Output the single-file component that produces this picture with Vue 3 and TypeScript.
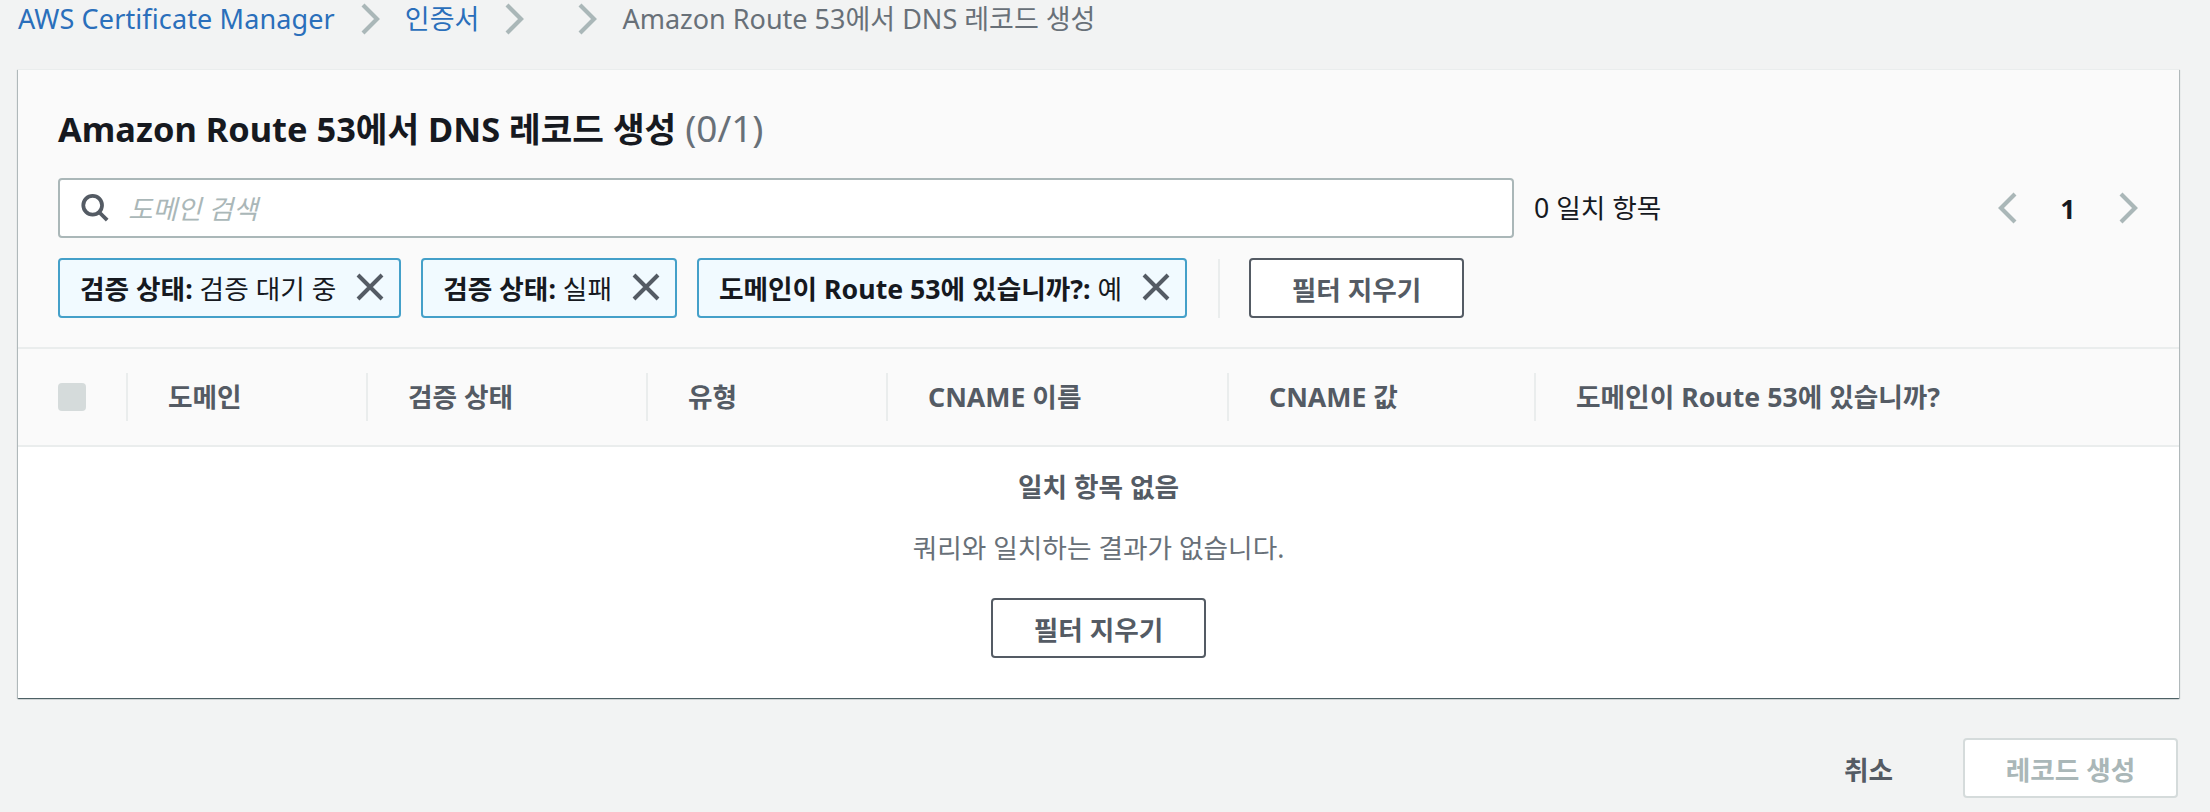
<template>
  <div class="page">
    <nav class="crumbs">
      <a class="crumb-link crumb-wide">AWS Certificate Manager</a>
      <svg class="crumb-sep" viewBox="0 0 20 32"><path d="M3 2l14 14L3 30" /></svg>
      <a class="crumb-link">인증서</a>
      <svg class="crumb-sep" viewBox="0 0 20 32"><path d="M3 2l14 14L3 30" /></svg>
      <span class="crumb-gap"></span>
      <svg class="crumb-sep" viewBox="0 0 20 32"><path d="M3 2l14 14L3 30" /></svg>
      <span class="crumb-current">Amazon Route 53에서 DNS 레코드 생성</span>
    </nav>

    <section class="card">
      <div class="card-head">
        <h2 class="title">Amazon Route 53에서 DNS 레코드 생성 <span class="count">(0/1)</span></h2>

        <div class="search-row">
          <div class="search">
            <svg class="search-icon" viewBox="0 0 32 32">
              <circle cx="13.5" cy="13" r="10" />
              <path d="M20.5 20.5L29 29" />
            </svg>
            <input type="text" placeholder="도메인 검색" />
          </div>
          <span class="matches">0 일치 항목</span>
          <div class="pager">
            <svg class="pager-arrow" viewBox="0 0 20 32"><path d="M17 2L3 16l14 14" /></svg>
            <span class="pager-num">1</span>
            <svg class="pager-arrow" viewBox="0 0 20 32"><path d="M3 2l14 14L3 30" /></svg>
          </div>
        </div>

        <div class="chips">
          <div v-for="chip in chips" :key="chip.value" class="chip">
            <span class="chip-text"><b>{{ chip.label }}:</b> {{ chip.value }}</span>
            <svg class="chip-x" viewBox="0 0 28 28"><path d="M2 2l24 24M26 2L2 26" /></svg>
          </div>
          <span class="chips-divider"></span>
          <button class="btn">필터 지우기</button>
        </div>
      </div>

      <div class="table-head">
        <div class="check-cell"><span class="checkbox"></span></div>
        <div v-for="col in columns" :key="col.name" class="th" :style="{ width: col.width + 'px' }">
          {{ col.name }}
        </div>
      </div>

      <div class="empty">
        <div class="empty-title">일치 항목 없음</div>
        <div class="empty-desc">쿼리와 일치하는 결과가 없습니다.</div>
        <button class="btn btn-white">필터 지우기</button>
      </div>
    </section>

    <footer class="actions">
      <a class="cancel">취소</a>
      <button class="btn-disabled">레코드 생성</button>
    </footer>
  </div>
</template>

<script setup lang="ts">
const chips = [
  { label: '검증 상태', value: '검증 대기 중' },
  { label: '검증 상태', value: '실패' },
  { label: '도메인이 Route 53에 있습니까?', value: '예' },
]

const columns = [
  { name: '도메인', width: 240 },
  { name: '검증 상태', width: 280 },
  { name: '유형', width: 240 },
  { name: 'CNAME 이름', width: 341 },
  { name: 'CNAME 값', width: 307 },
  { name: '도메인이 Route 53에 있습니까?', width: 640 },
]
</script>

<style>
html,
body {
  margin: 0;
  background: #f2f3f3;
}
</style>

<style scoped>
.page {
  width: 2210px;
  height: 812px;
  box-sizing: border-box;
  overflow: hidden;
  padding: 0 31px 0 18px;
  background: #f2f3f3;
  font-family: "Noto Sans", "Noto Sans CJK KR", sans-serif;
  font-size: 26.7px;
  color: #16191f;
}
.crumbs {
  display: flex;
  align-items: center;
  height: 37px;
  font-size: 27px;
  line-height: 37px;
  white-space: nowrap;
}
.crumb-link {
  color: #2a6fbb;
}
.crumb-wide {
  letter-spacing: 0.12px;
}
.crumb-current {
  color: #687078;
}
.crumb-sep {
  width: 20px;
  height: 32px;
  margin: 0 25px;
  flex: none;
}
.crumb-sep path,
.pager-arrow path {
  fill: none;
  stroke: #aab7b8;
  stroke-width: 4.2;
}
.crumb-gap {
  width: 3px;
}
.card {
  margin-top: 32px;
  height: 628px;
  background: #fff;
  border-top: 1px solid #eaeded;
  box-shadow: 0 1px 1px 0 rgba(0, 28, 36, 0.5), 1px 1px 1px 0 rgba(0, 28, 36, 0.2),
    -1px 1px 1px 0 rgba(0, 28, 36, 0.2);
}
.card-head {
  box-sizing: border-box;
  height: 279px;
  padding: 34px 40px 0;
  background: #fafafa;
  border-bottom: 2px solid #eaeded;
}
.title {
  margin: 0;
  font-size: 34.4px;
  line-height: 48px;
  font-weight: 700;
}
.count {
  font-size: 37px;
  font-weight: 400;
  color: #687078;
}
.search-row {
  display: flex;
  align-items: center;
  margin-top: 25px;
  height: 60px;
}
.search {
  display: flex;
  align-items: center;
  flex: none;
  width: 1456px;
  height: 60px;
  box-sizing: border-box;
  padding-left: 20px;
  background: #fff;
  border: 2px solid #aab7b8;
  border-radius: 4px;
}
.search-icon {
  width: 30px;
  height: 30px;
  flex: none;
}
.search-icon circle,
.search-icon path {
  fill: none;
  stroke: #545b64;
  stroke-width: 4;
}
.search input {
  flex: 1;
  margin-left: 16px;
  border: 0;
  outline: 0;
  background: transparent;
  font: inherit;
  color: #16191f;
}
.search input::placeholder {
  color: #aab7b8;
  font-style: italic;
  opacity: 1;
}
.matches {
  margin-left: 20px;
  padding-bottom: 4px;
}
.pager {
  display: flex;
  align-items: center;
  margin-left: auto;
  margin-right: 1px;
}
.pager-arrow {
  width: 20px;
  height: 32px;
}
.pager-num {
  width: 100px;
  text-align: center;
  font-weight: 700;
}
.chips {
  display: flex;
  align-items: center;
  margin-top: 20px;
}
.chip {
  display: flex;
  align-items: center;
  box-sizing: border-box;
  height: 60px;
  padding: 0 15px 2px 20px;
  margin-right: 20px;
  background: #f1faff;
  border: 2px solid #44a0c9;
  border-radius: 4px;
  white-space: nowrap;
}
.chip-text b {
  font-weight: 700;
}
.chip-x {
  width: 28px;
  height: 28px;
  margin-left: 20px;
  flex: none;
}
.chip-x path {
  fill: none;
  stroke: #545b64;
  stroke-width: 4;
}
.chips-divider {
  width: 2px;
  height: 59px;
  margin: 0 29px 0 11px;
  background: #eaeded;
}
.btn {
  box-sizing: border-box;
  flex: none;
  width: 215px;
  height: 60px;
  background: #fff;
  border: 2px solid #545b64;
  border-radius: 4px;
  font: inherit;
  font-weight: 700;
  color: #545b64;
}
.table-head {
  display: flex;
  align-items: center;
  height: 98px;
  background: #fafafa;
  border-bottom: 2px solid #eaeded;
  box-sizing: border-box;
}
.check-cell {
  width: 108px;
  padding-left: 40px;
  box-sizing: border-box;
  flex: none;
}
.checkbox {
  display: block;
  width: 28px;
  height: 28px;
  border-radius: 4px;
  background: #d5dbdb;
}
.th {
  box-sizing: border-box;
  flex: none;
  height: 48px;
  line-height: 48px;
  padding-left: 40px;
  border-left: 2px solid #eaeded;
  font-weight: 700;
  color: #545b64;
  white-space: nowrap;
}
.empty {
  display: flex;
  flex-direction: column;
  align-items: center;
  padding-top: 22px;
  background: #fff;
}
.empty-title {
  line-height: 36px;
  font-weight: 700;
  color: #545b64;
}
.empty-desc {
  margin-top: 25px;
  line-height: 36px;
  color: #687078;
}
.btn-white {
  margin-top: 32px;
}
.actions {
  display: flex;
  align-items: center;
  justify-content: flex-end;
  margin-top: 40px;
  margin-right: 1px;
}
.cancel {
  margin-right: 70px;
  font-weight: 700;
  color: #545b64;
}
.btn-disabled {
  box-sizing: border-box;
  width: 215px;
  height: 60px;
  background: #fff;
  border: 2px solid #d5dbdb;
  border-radius: 4px;
  font: inherit;
  font-weight: 700;
  color: #aab7b8;
}
</style>
